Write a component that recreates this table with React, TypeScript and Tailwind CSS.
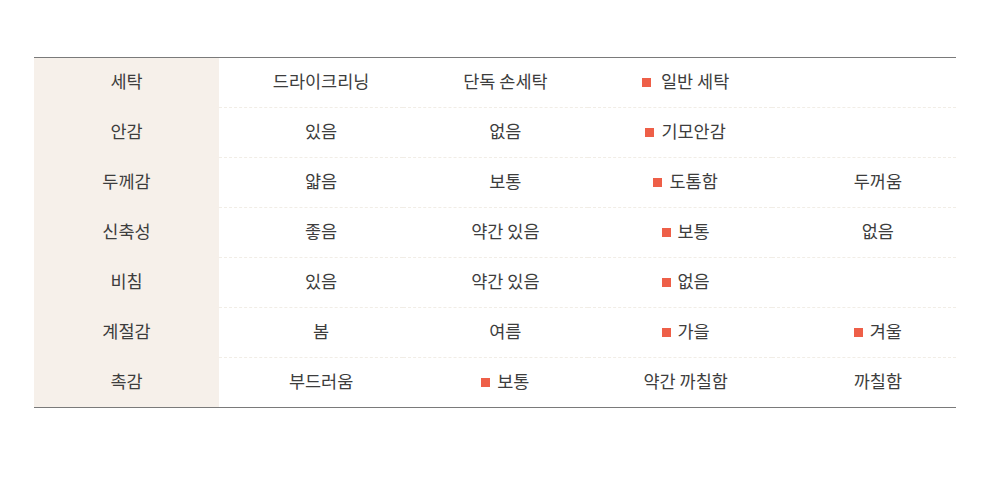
type Cell = { text: string; mark?: boolean; wide?: boolean };

const rows: { label: string; cells: Cell[] }[] = [
  {
    label: '세탁',
    cells: [
      { text: '드라이크리닝' },
      { text: '단독 손세탁' },
      { text: '일반 세탁', mark: true, wide: true },
      { text: '' },
    ],
  },
  {
    label: '안감',
    cells: [{ text: '있음' }, { text: '없음' }, { text: '기모안감', mark: true }, { text: '' }],
  },
  {
    label: '두께감',
    cells: [{ text: '얇음' }, { text: '보통' }, { text: '도톰함', mark: true }, { text: '두꺼움' }],
  },
  {
    label: '신축성',
    cells: [{ text: '좋음' }, { text: '약간 있음' }, { text: '보통', mark: true }, { text: '없음' }],
  },
  {
    label: '비침',
    cells: [{ text: '있음' }, { text: '약간 있음' }, { text: '없음', mark: true }, { text: '' }],
  },
  {
    label: '계절감',
    cells: [{ text: '봄' }, { text: '여름' }, { text: '가을', mark: true }, { text: '겨울', mark: true }],
  },
  {
    label: '촉감',
    cells: [{ text: '부드러움' }, { text: '보통', mark: true }, { text: '약간 까칠함' }, { text: '까칠함' }],
  },
];

const padding = ['pl-5', 'pl-5', 'pl-3', 'pl-7'];

export default function App() {
  return (
    <div
      className="w-[1000px] h-[477px] bg-white pt-[57px] px-[34px]"
      style={{ fontFamily: '"Noto Sans CJK KR", "Noto Sans", sans-serif' }}
    >
      <table className="w-[922px] border-collapse table-fixed border-t border-b border-[#7a7a7a] text-[17.5px] text-[#3d3d3d]">
        <colgroup>
          <col className="w-[185px]" />
          <col />
          <col />
          <col />
          <col />
        </colgroup>
        <tbody>
          {rows.map((row, i) => (
            <tr key={row.label} className="h-[50px]">
              <td className="bg-[#f6f0ea] text-center p-0 pb-[3px]">{row.label}</td>
              {row.cells.map((c, j) => (
                <td
                  key={j}
                  className={`text-center p-0 pb-[3px] ${padding[j]} ${
                    i < rows.length - 1 ? 'border-b border-dashed border-[#f1ede6]' : ''
                  }`}
                >
                  {c.mark && (
                    <span
                      className={`inline-block w-[9px] h-[9px] bg-[#ee5f48] align-middle relative -top-[1px] ${
                        c.wide ? 'mr-[10px]' : 'mr-[7px]'
                      }`}
                    />
                  )}
                  {c.text}
                </td>
              ))}
            </tr>
          ))}
        </tbody>
      </table>
    </div>
  );
}
